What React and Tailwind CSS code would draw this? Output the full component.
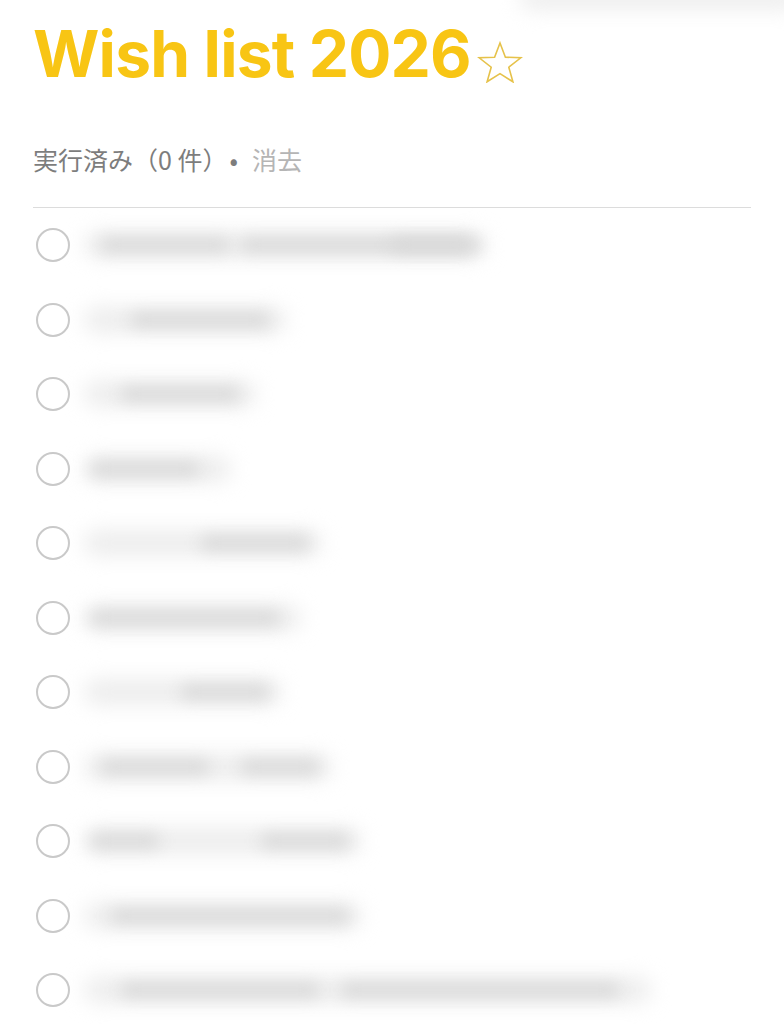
import React from "react";

const rows = [
  { w: 390, segs: [[10, 130], [150, 230], [300, 90]] },
  { w: 190, segs: [[40, 140]] },
  { w: 160, segs: [[30, 120]] },
  { w: 135, segs: [[0, 110]] },
  { w: 225, segs: [[110, 110]] },
  { w: 205, segs: [[0, 190]] },
  { w: 185, segs: [[90, 90]] },
  { w: 235, segs: [[10, 110], [150, 80]] },
  { w: 265, segs: [[0, 70], [170, 90]] },
  { w: 265, segs: [[20, 240]] },
  { w: 555, segs: [[30, 200], [250, 280]] },
];

function Blur({ w, segs }) {
  return (
    <div className="relative h-[34px]" style={{ width: w }}>
      <div className="absolute inset-x-[-6px] top-[4px] h-[26px] rounded-full bg-[#ededed] blur-[10px]" />
      {segs.map(([l, sw], i) => (
        <div
          key={i}
          className="absolute top-[10px] h-[14px] rounded-full bg-[#d8d8d8] blur-[8px]"
          style={{ left: l, width: sw }}
        />
      ))}
    </div>
  );
}

export default function App() {
  return (
    <div className="relative min-h-[1024px] w-[784px] overflow-hidden bg-white font-['Inter','Noto_Sans_CJK_JP',sans-serif]">
      <div className="absolute left-[520px] top-[-14px] h-[24px] w-[280px] rounded-full bg-[#eeeeee] blur-[10px]" />
      <div className="px-[33px] pt-[16px]">
        <h1 className="flex items-end text-[64px] font-bold leading-[76px] tracking-[-0.8px] text-[#f8c514]">
          <span>Wish list 2026</span>
          <svg className="mb-[9px] ml-[6px]" width="46" height="42" viewBox="0 0 46 42">
            <polygon
              points="23,2 28.4,16.2 43.8,16.8 31.8,26.2 35.9,40.8 23,32.6 10.1,40.8 14.2,26.2 2.2,16.8 17.6,16.2"
              fill="none"
              stroke="#e6c24a"
              strokeWidth="1.6"
              strokeLinejoin="miter"
            />
          </svg>
        </h1>
        <div className="mt-[50px] flex items-center text-[25px] leading-[34px] font-['Noto_Sans_CJK_JP',sans-serif]">
          <span className="text-[#7d7d7d]">実行済み（0 件）</span>
          <span className="ml-[2px] mr-[14px] text-[#7d7d7d]">•</span>
          <span className="text-[#b5b5b5]">消去</span>
        </div>
        <div className="mt-[31px] h-px bg-[#dcdcdc]" />
        <div className="flex flex-col">
          {rows.map((r, i) => (
            <div key={i} className="flex h-[74.5px] items-center">
              <div className="ml-[3px] h-[34px] w-[34px] shrink-0 rounded-full border-[2px] border-[#c9c9c9]" />
              <div className="ml-[20px]">
                <Blur {...r} />
              </div>
            </div>
          ))}
        </div>
      </div>
    </div>
  );
}
